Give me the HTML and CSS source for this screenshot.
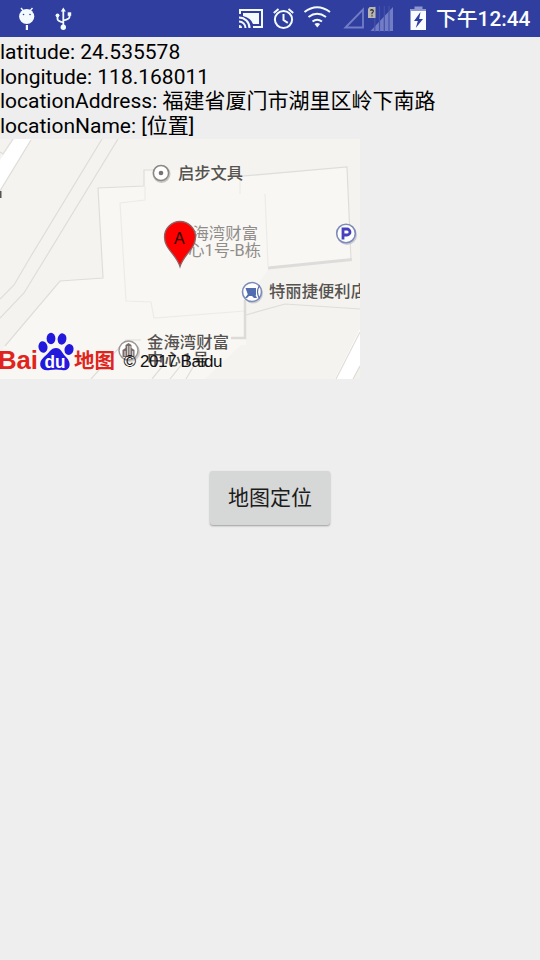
FILE: index.html
```html
<!DOCTYPE html>
<html lang="zh-CN">
<head>
<meta charset="utf-8">
<title>地图定位</title>
<link rel="stylesheet" href="styles.css">
</head>
<body>
<header class="status-bar">
  <svg class="status-icons" viewBox="0 0 430 37" width="430" height="37">
    <g fill="#f4fbff" stroke="none">
      <circle cx="26.700" cy="16.500" r="7.600"/>
      <path d="M21 8l2.500 3M32.500 8l-2.500 3" stroke="#f4fbff" stroke-width="1.400"/>
      <rect x="25.800" y="25" width="2.200" height="5"/>
      <circle cx="23.500" cy="14.500" r=".8" fill="#303f9f"/>
      <circle cx="30" cy="14.500" r=".8" fill="#303f9f"/>
    </g>
    <g fill="none" stroke="#f4fbff" stroke-width="1.800">
      <path d="M63.300 27V10M57.500 16v3q0 2 5.800 3.500M69.500 15v2q0 2-6.200 3.500"/>
      <path d="M60.800 11.500l2.500-4 2.500 4z" fill="#f4fbff" stroke="none"/>
      <circle cx="63.300" cy="27.300" r="2.700" fill="#f4fbff" stroke="none"/>
      <circle cx="57.500" cy="15.300" r="1.900" fill="#f4fbff" stroke="none"/>
      <rect x="67.700" y="12.300" width="3.500" height="3.500" fill="#f4fbff" stroke="none"/>
    </g>
    <g fill="none" stroke="#f4fbff" stroke-width="2">
      <path d="M240 14V10h22v17h-9"/>
      <path d="M243 13h16v11h-6q-2-6-10-8z" fill="#f4fbff" stroke="none"/>
      <path d="M239 17.500a10.500 10.500 0 0 1 10.500 10.500M239 21.500a6.500 6.500 0 0 1 6.500 6.500"/>
      <path d="M239 25a3 3 0 0 1 3 3h-3z" fill="#f4fbff" stroke="none"/>
    </g>
    <g fill="none" stroke="#f4fbff" stroke-width="2">
      <circle cx="283.500" cy="19.500" r="8.600"/>
      <path d="M283.500 14v6l4.300 2.800M273.800 13l4.700-4M293.200 13l-4.700-4"/>
    </g>
    <g fill="none" stroke="#f4fbff" stroke-width="2">
      <path d="M304.500 12q12.500-9.500 25.500 0M308.500 17q8.500-6.500 17.500 0M312.500 21.500q4.500-3.500 9.500 0"/>
      <path d="M314.500 24q2.800-2 5.600 0l-2.800 3.500z" fill="#f4fbff" stroke="none"/>
    </g>
    <path d="M345.500 27.500L363 9.500v18z" fill="none" stroke="#737dc5" stroke-width="1.800"/>
    <path d="M370.500 31l22.500-24v24z" fill="#737dc5"/>
    <path d="M374.800 6v26M379.500 6v26M384.300 6v26M389 6v26" stroke="#4451aa" stroke-width="1.200"/>
    <path d="M369.500 7h6v11h-7.500v-9z" fill="#b9b7b0"/>
    <path d="M370.300 10.500q1.500-1.500 3 0 .5 1.500-1.300 2.500v1.300M372 15.300v1.200" fill="none" stroke="#333" stroke-width="1.200"/>
    <path d="M410.500 9h15.500v21h-15.500z" fill="#fafdff"/>
    <path d="M414.500 6.500h8v2.500h3.500v2h-15.500v-2h4z" fill="#8d96d0"/>
    <path d="M420.500 12l-6.500 9h3.800l-2 7 7.200-9h-3.800z" fill="#303f9f"/>
  </svg>
  <time class="clock">下午12:44</time>
</header>
<main class="content">
  <p class="info">latitude: 24.535578</p>
  <p class="info">longitude: 118.168011</p>
  <p class="info">locationAddress: 福建省厦门市湖里区岭下南路</p>
  <p class="info">locationName: [位置]</p>
  <svg class="map" viewBox="0 139 360 240" width="360" height="240">
    <rect y="139" width="360" height="240" fill="#f4f3f0"/>
    <path d="M14 139h17L0 190v-30z" fill="#fff"/>
    <path d="M98 188l46-2v-16h96v7l107-10 5 93-84 9-22 35v41L224 379H0V352L60 281l42-3z" fill="#f8f7f4"/>
    <path d="M246 315l39-11 75 5v70H205l36-34h5z" fill="#f4f3f0"/>
    <path d="M360 329L335 379h25z" fill="#fff"/>
    <path d="M353 379l7-14v14z" fill="#f2f1ed"/>
    <g fill="none" stroke="#dfddd9" stroke-width="1.200">
      <path d="M13 139L3 154l-3-2M31 140L0 191M102 139L31 256 14 285 0 299M118 139L46 257 24 293 0 318"/>
      <path d="M5 346L60 281l43-3-5-90 46-2v-16h12M243 176l104-9 4 92"/>
      <path d="M246 315l39-11 75 5M360 332l-24 47M360 366l-7 13M91 379l35-39h15M152 379l13-16M170 379l16-20M186 379l13-22"/>
    </g>
    <path d="M145 186v14l-25 3 6 98 25 1 3 16 91-7M240 177v17M265 194l3 72" fill="none" stroke="#edebe8" stroke-width="1.200"/>
    <path d="M268 268l84-8.500" fill="none" stroke="#dddcda" stroke-width="3"/>
    <path d="M245 300v38h-14" fill="none" stroke="#dcdbd8" stroke-width="2.500"/>
    <path d="M0 191h1.500v7H0z" fill="#555"/>
    <g stroke="#8c8985" fill="#fff">
      <circle cx="161.500" cy="174" r="8" stroke="#c8c5c2" stroke-width="2"/>
      <circle cx="161" cy="173" r="7.600" stroke-width="1.500"/>
      <circle cx="161" cy="173" r="2.300" fill="#77736f" stroke="none"/>
    </g>
    <g class="place">
      <text x="178" y="178.500" textLength="65">启步文具</text>
      <text x="269" y="297" textLength="98">特丽捷便利店</text>
      <text x="147" y="348" textLength="82">金海湾财富</text>
      <text x="147" y="365" textLength="62">中心1号</text>
    </g>
    <g class="place place-light">
      <text x="176" y="238.500" textLength="82">金海湾财富</text>
      <text x="172" y="256" textLength="89">中心1号-B栋</text>
    </g>
    <g fill="#fff">
      <circle cx="347" cy="235" r="10" fill="#c8cbd4"/>
      <circle cx="346" cy="233.500" r="9.300" stroke="#7e8cb8" stroke-width="1.600"/>
      <path d="M343 239.500V229h4a3 3 0 0 1 0 6h-4" fill="none" stroke="#4940bd" stroke-width="2.800"/>
      <circle cx="253" cy="293.500" r="10" fill="#cbcdd4"/>
      <circle cx="252" cy="292" r="9.500" stroke="#7e8cb8" stroke-width="1.600"/>
      <path d="M245.500 288h10.500v7h-8zM245 298l3-4h7l2 4h-3l-2-2h-3l-2 2z" fill="#536cb0"/>
      <path d="M259.500 285.500q-4 6.500 0 13" fill="none" stroke="#536cb0" stroke-width="1.200"/>
      <circle cx="130" cy="352" r="10" fill="#cfccca"/>
      <circle cx="128.500" cy="350.500" r="9.500" stroke="#9b9794" stroke-width="1.400"/>
      <path d="M122.500 357v-7l3-2v-3l3-2 3 2v3l3 2v7z" fill="#776c69"/>
      <path d="M125 351v5M127.700 346v10M130 346v10M132.700 351v5" stroke="#fff" stroke-width=".8"/>
    </g>
    <path d="M180 266.500C176 254 164.500 249 164.500 237a15.500 15.500 0 0 1 31 0C195.500 249 184 254 180 266.500z" fill="#fe0000" stroke="#8d6262" stroke-width="1.300"/>
    <text class="pin-label" x="174" y="243.500" textLength="11">A</text>
    <text class="logo-red" x="-2" y="368.500" textLength="40" lengthAdjust="spacingAndGlyphs">Bai</text>
    <g fill="#2319dc">
      <ellipse cx="43" cy="347" rx="4.500" ry="5.800" transform="rotate(-12 43 347)"/>
      <ellipse cx="51" cy="338.500" rx="4.400" ry="5.700"/>
      <ellipse cx="62" cy="339" rx="4.400" ry="5.700" transform="rotate(10 62 339)"/>
      <ellipse cx="69" cy="349.500" rx="4.500" ry="5.500" transform="rotate(15 69 349.500)"/>
      <path d="M56 348c5 0 6 5 10 9 7 7 3 15-4 13q-6-1-12 0c-10 2-13-7-6-13 5-4 7-9 12-9z"/>
    </g>
    <text class="logo-du" x="44.500" y="368" textLength="21" lengthAdjust="spacingAndGlyphs">du</text>
    <text class="logo-map" x="74" y="368" textLength="41">地图</text>
    <text class="copyright" x="123.500" y="367" textLength="99">© 2017 Baidu</text>
  </svg>
  <button class="locate" type="button">地图定位</button>
</main>
</body>
</html>
```
FILE: styles.css
```css
body {
  margin: 0;
  min-height: 960px;
  background: #eee;
  color: #000;
  font-family: Roboto, "Noto Sans CJK SC", sans-serif;
}

.status-bar {
  display: flex;
  height: 37px;
  background: #303f9f;
}

.status-icons {
  flex: none;
}

.clock {
  margin-left: 6px;
  color: #fafdff;
  font-size: 20.8px;
  font-weight: 500;
  line-height: 39px;
  white-space: nowrap;
}

.content {
  display: flex;
  flex-direction: column;
  padding-top: 3.400px;
}

.info {
  height: 24.5px;
  margin: 0;
  font-size: 21px;
  line-height: 24.5px;
  white-space: nowrap;
}

.map {
  display: block;
  margin-top: .6px;
  overflow: hidden;
}

.place {
  fill: #55524f;
  font-size: 16.3px;
  font-weight: 500;
}

.place-light {
  fill: #8f8c89;
  font-weight: 400;
}

.pin-label {
  fill: #200;
  font: 16px "Liberation Sans", sans-serif;
}

.logo-red {
  fill: #e0241b;
  font: bold 25px "Liberation Sans", sans-serif;
}

.logo-map {
  fill: #e0241b;
  font-size: 20.5px;
  font-weight: 700;
}

.logo-du {
  fill: #fff;
  font: bold 18px "Liberation Sans", sans-serif;
}

.copyright {
  fill: #111;
  font: 17px "Liberation Sans", sans-serif;
}

.locate {
  align-self: center;
  width: 120px;
  height: 54px;
  margin-top: 92px;
  padding: 0;
  border: 0;
  border-radius: 3px;
  background: #d6d7d7;
  box-shadow: 0 1px 2px rgba(0, 0, 0, .35);
  color: #1c1c1c;
  font: 21px/54px Roboto, "Noto Sans CJK SC", sans-serif;
}
```
